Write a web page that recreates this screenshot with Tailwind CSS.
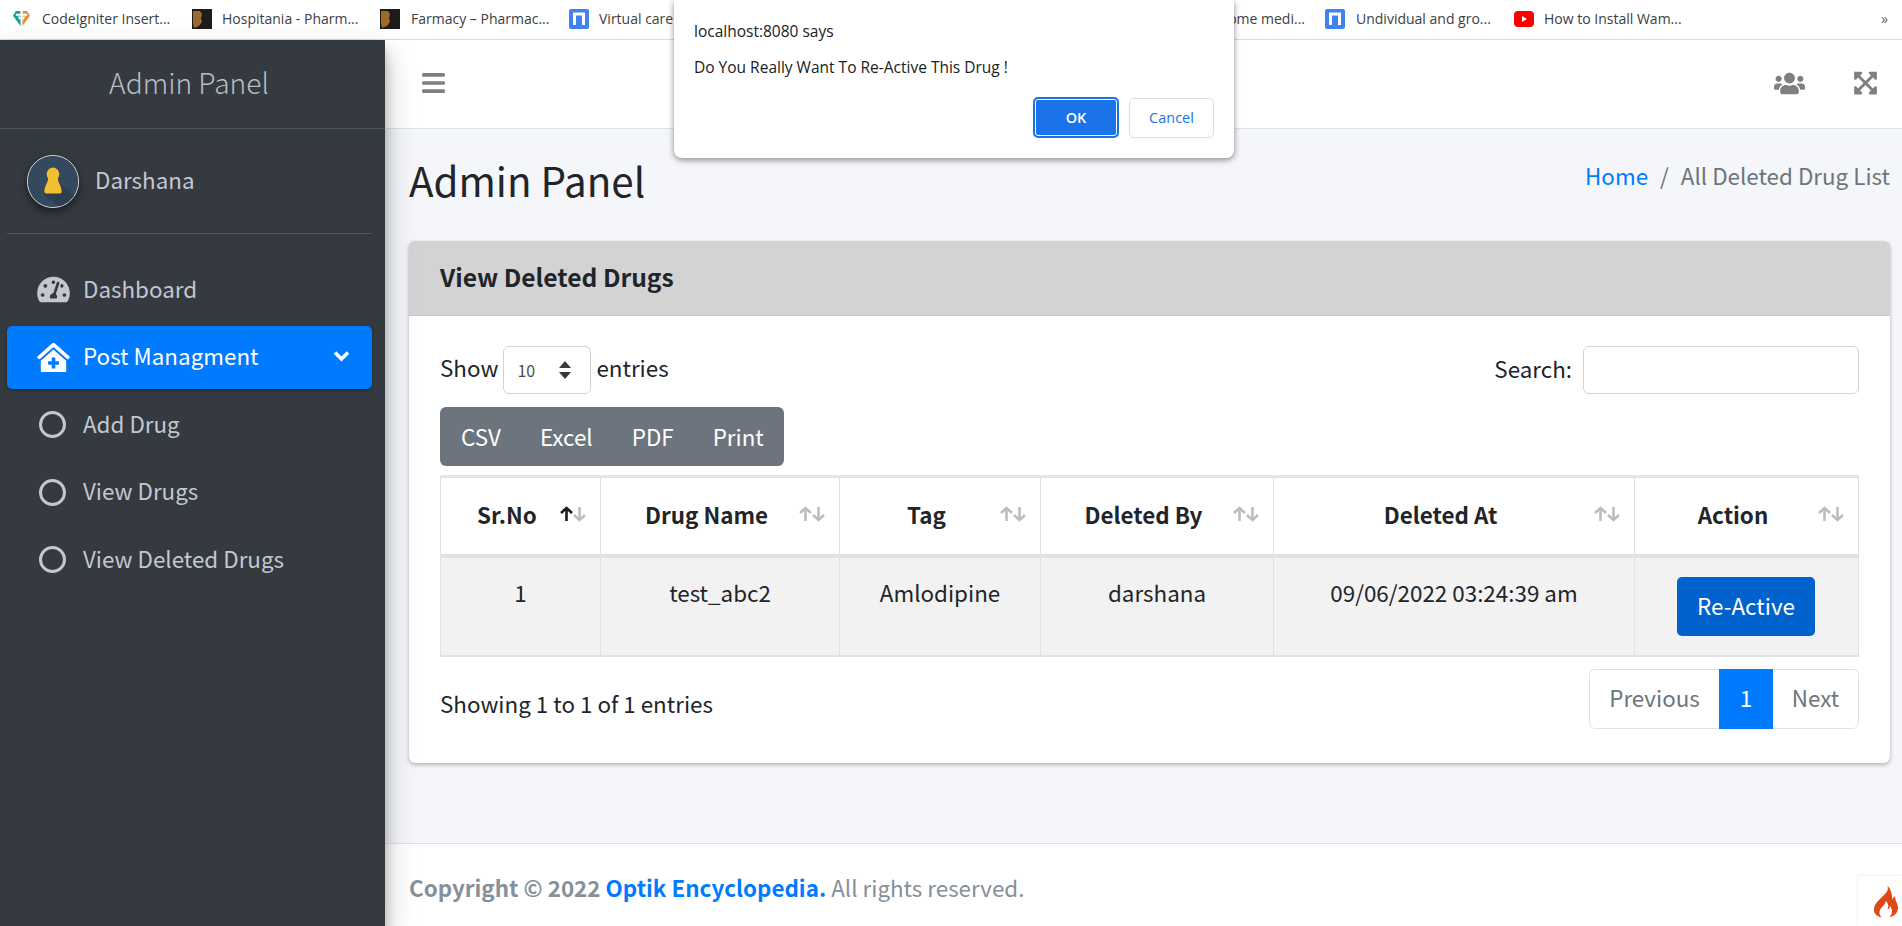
<!DOCTYPE html>
<html lang="en">
<head>
  <meta charset="UTF-8" />
  <title>Admin Panel</title>
  <script src="https://cdn.jsdelivr.net/npm/@tailwindcss/browser@4"></script>
</head>
<body class="relative h-[926px] overflow-hidden flex flex-col bg-[#f4f6f9] text-[22.4px] text-[#212529] font-['Noto_Sans_CJK_JP','Noto_Sans',sans-serif]">

  <!-- Bookmarks bar -->
  <div class="h-[40px] shrink-0 bg-white border-b border-[#d9dadc] flex items-center pl-[12px] pb-[2px] text-[14px] text-[#3c4043] font-['Open_Sans',sans-serif] whitespace-nowrap relative">
    <div class="w-[180px] flex items-center gap-[11px]">
      <svg class="w-[19px] h-[19px]" viewBox="0 0 20 20" fill="none"><path d="M9 2 H4 L1 7 L9 18 Z" fill="#1a9e96"/><path d="M11 2 H16 L19 7 L11 18 Z" fill="#e8913c"/><path d="M4 6 H16 M10 0 V6" stroke="#fff" stroke-width="2"/><path d="M6 8 H9 V13 Z" fill="#fff"/><path d="M14 8 H11 V13 Z" fill="#fff"/></svg>
      <span>CodeIgniter Insert...</span>
    </div>
    <div class="w-[188px] flex items-center gap-[10px]">
      <svg class="w-[20px] h-[20px]" viewBox="0 0 20 20"><rect width="20" height="20" fill="#1d1c1a"/><path d="M1 2 H8 L10 5 L9 9 L10 13 L7 17 L2 19 L1 14 Z" fill="#9c6a2c"/></svg>
      <span>Hospitania - Pharm...</span>
    </div>
    <div class="w-[189px] flex items-center gap-[11px]">
      <svg class="w-[20px] h-[20px]" viewBox="0 0 20 20"><rect width="20" height="20" fill="#1d1c1a"/><path d="M1 2 H8 L10 5 L9 9 L10 13 L7 17 L2 19 L1 14 Z" fill="#9c6a2c"/></svg>
      <span>Farmacy – Pharmac...</span>
    </div>
    <div class="w-[188px] flex items-center gap-[10px]">
      <svg class="w-[20px] h-[20px]" viewBox="0 0 20 20"><rect width="20" height="20" rx="2" fill="#3f83f0"/><path d="M5.5 16 V5 H14.5 V16" fill="none" stroke="#fff" stroke-width="3"/></svg>
      <span>Virtual care...</span>
    </div>
    <div class="w-[568px] pr-[20px] text-right">At home medi...</div>
    <div class="w-[189px] flex items-center gap-[11px]">
      <svg class="w-[20px] h-[20px]" viewBox="0 0 20 20"><rect width="20" height="20" rx="2" fill="#3f83f0"/><path d="M5.5 16 V5 H14.5 V16" fill="none" stroke="#fff" stroke-width="3"/></svg>
      <span>Undividual and gro...</span>
    </div>
    <div class="flex items-center gap-[10px]">
      <svg class="w-[20px] h-[16px]" viewBox="0 0 20 16"><rect width="20" height="16" rx="4" fill="#f00"/><path d="M8 5 L13 8 L8 11 Z" fill="#fff"/></svg>
      <span>How to Install Wam...</span>
    </div>
    <span class="ml-auto mr-[14px] text-[14px] text-[#5f6368]">»</span>
  </div>

  <div class="flex-1 flex min-h-0">

    <!-- Sidebar -->
    <aside class="w-[385px] shrink-0 bg-[#343a40] text-[#c2c7d0] z-10 shadow-[0_14px_28px_rgba(0,0,0,0.25),0_10px_10px_rgba(0,0,0,0.22)]">
      <div class="h-[89px] border-b border-[#4b545c] flex items-center justify-center text-[28.2px] font-light text-[#b8bdc5] pb-[4px] pr-[7px]">Admin Panel</div>
      <div class="ml-[7px] mr-[13px] h-[105px] border-b border-[#4f5962] flex items-center pl-[20px] gap-[16px]">
        <svg class="w-[52px] h-[53px] rounded-full border border-[#d5d8dc] shadow-[0_4px_8px_rgba(0,0,0,0.5)]" viewBox="0 0 52 53">
          <circle cx="26" cy="26.5" r="26" fill="#34495e"/>
          <path d="M24 22 L52 44 L34 53 L16 40 Z" fill="#2c3e50"/>
          <ellipse cx="26" cy="19" rx="6.5" ry="7" fill="#f0c030"/>
          <path d="M21 22 H31 C31 28 35 31 35 37 Q35 39 33 39 H19 Q17 39 17 37 C17 31 21 28 21 22 Z" fill="#f0c030"/>
        </svg>
        <span class="mb-[2px]">Darshana</span>
      </div>
      <nav class="pl-[7px] pr-[13px] pt-[24px] flex flex-col gap-[4.5px]">
        <a class="h-[63px] flex items-center pl-[30px] gap-[13px]">
          <svg class="w-[33px] h-[29px] fill-[#c2c7d0]" viewBox="0 0 576 512"><path d="M288 32C128.94 32 0 160.94 0 320c0 52.8 14.25 102.26 39.06 144.8 5.61 9.62 16.3 15.2 27.44 15.2h443c11.14 0 21.83-5.58 27.44-15.2C561.75 422.26 576 372.8 576 320c0-159.06-128.94-288-288-288zm0 64c14.71 0 26.58 10.13 30.32 23.65-1.11 2.26-2.64 4.23-3.45 6.67l-9.22 27.67c-5.13 3.49-10.97 6.01-17.64 6.01-17.67 0-32-14.33-32-32S270.33 96 288 96zM96 384c-17.67 0-32-14.33-32-32s14.33-32 32-32 32 14.33 32 32-14.33 32-32 32zm48-160c-17.67 0-32-14.33-32-32s14.33-32 32-32 32 14.33 32 32-14.33 32-32 32zm246.77-72.41l-61.33 184C343.13 347.33 352 364.54 352 384c0 11.72-3.38 22.55-8.88 32H232.88c-5.5-9.45-8.88-20.28-8.88-32 0-33.94 26.5-61.43 59.9-63.59l61.34-184.01c4.17-12.56 17.73-19.45 30.36-15.17 12.57 4.19 19.35 17.79 15.17 30.36zm14.66 57.2l15.52-46.55c3.47-1.29 7.13-2.23 11.05-2.23 17.67 0 32 14.33 32 32s-14.33 32-32 32c-11.38-.01-20.89-6.28-26.57-15.22zM480 384c-17.67 0-32-14.33-32-32s14.33-32 32-32 32 14.33 32 32-14.33 32-32 32z"/></svg>
          <span class="mb-[2px]">Dashboard</span>
        </a>
        <a class="h-[63px] flex items-center pl-[30px] gap-[13px] bg-[#007bff] text-white rounded-[5px] shadow-[0_1px_3px_rgba(0,0,0,0.4)]">
          <svg class="w-[33px] h-[29px] fill-white" viewBox="0 0 576 512"><path d="M288 115L69.47 307.71c-1.62 1.46-3.69 2.14-5.47 3.35V496a16 16 0 0 0 16 16h416a16 16 0 0 0 16-16V311.1c-1.7-1.16-3.72-1.82-5.26-3.2zm96 261a8 8 0 0 1-8 8h-56v56a8 8 0 0 1-8 8h-48a8 8 0 0 1-8-8v-56h-56a8 8 0 0 1-8-8v-48a8 8 0 0 1 8-8h56v-56a8 8 0 0 1 8-8h48a8 8 0 0 1 8 8v56h56a8 8 0 0 1 8 8zm186.69-139.72l-255.94-226a39.85 39.85 0 0 0-53.45 0l-256 226a16 16 0 0 0-1.21 22.6L25.5 282.7a16 16 0 0 0 22.6 1.21L277.42 81.63a16 16 0 0 1 21.17 0L527.91 283.9a16 16 0 0 0 22.6-1.21l21.4-23.82a16 16 0 0 0-1.22-22.59z"/></svg>
          <span class="flex-1 mb-[2px]">Post Managment</span>
          <svg class="w-[17px] h-[12px] mr-[22px] mb-[2px]" viewBox="0 0 17 12" fill="none" stroke="#fff" stroke-width="3.6"><path d="M2 2.5 L8.5 9 L15 2.5"/></svg>
        </a>
        <a class="h-[63px] flex items-center pl-[32px] gap-[17px]">
          <span class="w-[27px] h-[27px] rounded-full border-[3px] border-[#c2c7d0]"></span>
          <span class="mb-[2px]">Add Drug</span>
        </a>
        <a class="h-[63px] flex items-center pl-[32px] gap-[17px]">
          <span class="w-[27px] h-[27px] rounded-full border-[3px] border-[#c2c7d0]"></span>
          <span class="mb-[2px]">View Drugs</span>
        </a>
        <a class="h-[63px] flex items-center pl-[32px] gap-[17px]">
          <span class="w-[27px] h-[27px] rounded-full border-[3px] border-[#c2c7d0]"></span>
          <span class="mb-[2px]">View Deleted Drugs</span>
        </a>
      </nav>
    </aside>

    <!-- Main -->
    <div class="flex-1 min-w-0 flex flex-col">
      <header class="h-[89px] shrink-0 bg-white border-b border-[#dee2e6] flex items-center pl-[37px] pr-[25px] pb-[2px]">
        <svg class="w-[23px] h-[26px] fill-[#7f7f7f]" viewBox="0 0 448 512"><path d="M16 132h416c8.837 0 16-7.163 16-16V76c0-8.837-7.163-16-16-16H16C7.163 60 0 67.163 0 76v40c0 8.837 7.163 16 16 16zm0 160h416c8.837 0 16-7.163 16-16v-40c0-8.837-7.163-16-16-16H16c-8.837 0-16 7.163-16 16v40c0 8.837 7.163 16 16 16zm0 160h416c8.837 0 16-7.163 16-16v-40c0-8.837-7.163-16-16-16H16c-8.837 0-16 7.163-16 16v40c0 8.837 7.163 16 16 16z"/></svg>
        <svg class="ml-auto w-[31px] h-[25px] fill-[#7f7f7f]" viewBox="0 0 640 512"><path d="M96 224c35.3 0 64-28.7 64-64s-28.7-64-64-64-64 28.7-64 64 28.7 64 64 64zm448 0c35.3 0 64-28.7 64-64s-28.7-64-64-64-64 28.7-64 64 28.7 64 64 64zm32 32h-64c-17.6 0-33.5 7.1-45.1 18.6 40.3 22.1 68.9 62 75.1 109.4h66c17.7 0 32-14.3 32-32v-32c0-35.3-28.7-64-64-64zm-256 0c61.9 0 112-50.1 112-112S381.9 32 320 32 208 82.1 208 144s50.1 112 112 112zm76.8 32h-8.3c-20.8 10-43.9 16-68.5 16s-47.6-6-68.5-16h-8.3C179.6 288 128 339.6 128 403.2V432c0 26.5 21.5 48 48 48h288c26.5 0 48-21.5 48-48v-28.8c0-63.6-51.6-115.2-115.2-115.2zm-223.7-13.4C161.5 263.1 145.6 256 128 256H64c-35.3 0-64 28.7-64 64v32c0 17.7 14.3 32 32 32h65.9c6.3-47.4 34.9-87.3 75.2-109.4z"/></svg>
        <svg class="ml-[49px] w-[23px] h-[26px] fill-[#7f7f7f]" viewBox="0 0 448 512"><path d="M448 344v112a23.94 23.94 0 0 1-24 24H312c-21.39 0-32.09-25.9-17-41l36.2-36.2L224 295.6 116.77 402.9 153 439c15.09 15.1 4.39 41-17 41H24a23.94 23.94 0 0 1-24-24V344c0-21.4 25.89-32.1 41-17l36.19 36.2L184.46 256 77.18 148.7 41 185c-15.1 15.1-41 4.4-41-17V56a23.94 23.94 0 0 1 24-24h112c21.39 0 32.09 25.9 17 41l-36.2 36.2L224 216.4l107.23-107.3L295 73c-15.09-15.1-4.39-41 17-41h112a23.94 23.94 0 0 1 24 24v112c0 21.4-25.89 32.1-41 17l-36.19-36.2L263.54 256l107.28 107.3L407 327.1c15.1-15.2 41-4.5 41 16.9z"/></svg>
      </header>

      <div class="flex-1 pl-[24px] pr-[12px]">
        <div class="h-[112px] flex items-start justify-between">
          <h1 class="text-[40.3px] leading-[52px] mt-[25px]">Admin Panel</h1>
          <div class="mt-[28px] leading-[36px] flex gap-[12px]">
            <a class="text-[#007bff]">Home</a>
            <span class="text-[#6c757d]">/</span>
            <span class="text-[#6c757d]">All Deleted Drug List</span>
          </div>
        </div>

        <!-- Card -->
        <section class="bg-white rounded-[6px] shadow-[0_0_1px_rgba(0,0,0,0.2),0_2px_4px_rgba(0,0,0,0.25)] h-[522px] overflow-hidden">
          <div class="h-[75px] bg-[#d3d3d3] border-b border-[#c8c8c8] flex items-center pl-[31px] pb-[3px]">
            <h3 class="text-[24.6px] font-bold">View Deleted Drugs</h3>
          </div>
          <div class="px-[31px] pt-[30px]">
            <div class="flex justify-between h-[48px]">
              <div class="flex items-center gap-[5px]">
                <span class="mb-[4px]">Show</span>
                <div class="w-[88px] h-[48px] border border-[#ced4da] rounded-[6px] flex items-center justify-between pl-[13px] pr-[18px] text-[16px] text-[#495057]">
                  <span>10</span>
                  <svg class="w-[14px] h-[20px] fill-[#343a40]" viewBox="0 0 14 20"><path d="M7 1 L13 8 H1 Z M7 19 L1 12 H13 Z"/></svg>
                </div>
                <span class="mb-[4px]">entries</span>
              </div>
              <div class="flex items-center gap-[11px]">
                <span class="mb-[2px]">Search:</span>
                <div class="w-[276px] h-[48px] border border-[#ced4da] rounded-[6px]"></div>
              </div>
            </div>
            <div class="mt-[13px] w-[344px] h-[59px] bg-[#6c757d] rounded-[6px] flex items-center text-white pl-[21px] gap-[39px]">
              <span>CSV</span><span>Excel</span><span>PDF</span><span>Print</span>
            </div>

            <table class="mt-[9px] w-[1419px] table-fixed border-separate border-spacing-0 border-t-2 border-[#e4e6e9]">
              <colgroup>
                <col class="w-[160px]" /><col class="w-[239px]" /><col class="w-[201px]" /><col class="w-[233px]" /><col class="w-[361px]" /><col class="w-[225px]" />
              </colgroup>
              <thead>
                <tr class="h-[81px] font-bold">
                  <th class="relative border-t border-l border-b-[4px] border-[#dee2e6] pr-[27px] pb-[2px] font-bold">Sr.No
                    <svg class="absolute right-[14px] top-[28px] w-[26px] h-[16px]" viewBox="0 0 26 16" fill="none" stroke-width="2.6"><path d="M6.5 15 V2 M1 7 L6.5 2 L12 7" stroke="#1a1a1a"/><path d="M19.5 1 V14 M14 9 L19.5 14 L25 9" stroke="#bdbdbd"/></svg>
                  </th>
                  <th class="relative border-t border-l border-b-[4px] border-[#dee2e6] pr-[27px] pb-[2px] font-bold">Drug Name
                    <svg class="absolute right-[14px] top-[28px] w-[26px] h-[16px]" viewBox="0 0 26 16" fill="none" stroke-width="2.6" stroke="#bdbdbd"><path d="M6.5 15 V2 M1 7 L6.5 2 L12 7"/><path d="M19.5 1 V14 M14 9 L19.5 14 L25 9"/></svg>
                  </th>
                  <th class="relative border-t border-l border-b-[4px] border-[#dee2e6] pr-[27px] pb-[2px] font-bold">Tag
                    <svg class="absolute right-[14px] top-[28px] w-[26px] h-[16px]" viewBox="0 0 26 16" fill="none" stroke-width="2.6" stroke="#bdbdbd"><path d="M6.5 15 V2 M1 7 L6.5 2 L12 7"/><path d="M19.5 1 V14 M14 9 L19.5 14 L25 9"/></svg>
                  </th>
                  <th class="relative border-t border-l border-b-[4px] border-[#dee2e6] pr-[27px] pb-[2px] font-bold">Deleted By
                    <svg class="absolute right-[14px] top-[28px] w-[26px] h-[16px]" viewBox="0 0 26 16" fill="none" stroke-width="2.6" stroke="#bdbdbd"><path d="M6.5 15 V2 M1 7 L6.5 2 L12 7"/><path d="M19.5 1 V14 M14 9 L19.5 14 L25 9"/></svg>
                  </th>
                  <th class="relative border-t border-l border-b-[4px] border-[#dee2e6] pr-[27px] pb-[2px] font-bold">Deleted At
                    <svg class="absolute right-[14px] top-[28px] w-[26px] h-[16px]" viewBox="0 0 26 16" fill="none" stroke-width="2.6" stroke="#bdbdbd"><path d="M6.5 15 V2 M1 7 L6.5 2 L12 7"/><path d="M19.5 1 V14 M14 9 L19.5 14 L25 9"/></svg>
                  </th>
                  <th class="relative border-t border-x border-b-[4px] border-[#dee2e6] pr-[27px] pb-[2px] font-bold">Action
                    <svg class="absolute right-[14px] top-[28px] w-[26px] h-[16px]" viewBox="0 0 26 16" fill="none" stroke-width="2.6" stroke="#bdbdbd"><path d="M6.5 15 V2 M1 7 L6.5 2 L12 7"/><path d="M19.5 1 V14 M14 9 L19.5 14 L25 9"/></svg>
                  </th>
                </tr>
              </thead>
              <tbody>
                <tr class="h-[99px] bg-[#f2f2f2] text-center align-top">
                  <td class="border-l border-b-2 border-[#dee2e6] pt-[18px]">1</td>
                  <td class="border-l border-b-2 border-[#dee2e6] pt-[18px]">test_abc2</td>
                  <td class="border-l border-b-2 border-[#dee2e6] pt-[18px]">Amlodipine</td>
                  <td class="border-l border-b-2 border-[#dee2e6] pt-[18px]">darshana</td>
                  <td class="border-l border-b-2 border-[#dee2e6] pt-[18px]">09/06/2022 03:24:39 am</td>
                  <td class="border-x border-b-2 border-[#dee2e6] pt-[19px]">
                    <button class="w-[138px] h-[59px] mr-[1px] pb-[2px] bg-[#0062cc] text-white rounded-[5px]">Re-Active</button>
                  </td>
                </tr>
              </tbody>
            </table>

            <div class="mt-[12px] flex items-start justify-between">
              <span class="mt-[18px]">Showing 1 to 1 of 1 entries</span>
              <div class="h-[60px] flex items-stretch rounded-[6px] border border-[#dee2e6] text-[#6c757d]">
                <span class="w-[129px] pb-[2px] flex items-center justify-center">Previous</span>
                <span class="w-[54px] -my-px pb-[2px] flex items-center justify-center bg-[#007bff] text-white">1</span>
                <span class="w-[85px] pb-[2px] flex items-center justify-center">Next</span>
              </div>
            </div>
          </div>
        </section>
      </div>

      <footer class="h-[83px] shrink-0 bg-white border-t border-[#dee2e6] flex items-center pl-[24px] pt-[5px] text-[#869099]">
        <p><b>Copyright © 2022 <a class="text-[#007bff]">Optik Encyclopedia.</a></b> All rights reserved.</p>
      </footer>
    </div>
  </div>

  <!-- Profiler badge -->
  <div class="absolute right-0 bottom-0 w-[44px] h-[50px] bg-white shadow-[0_0_2px_rgba(0,0,0,0.15)] z-20 flex items-center justify-center pl-[11px]">
    <svg class="w-[24px] h-[33px] fill-[#dd4814]" viewBox="0 0 25 33"><path d="M14 0 C16 6 11 9 7 13 C3 17 0 20 0 25 C0 29 3 32 8 33 C5 30 5 27 7 24 C9 21 12 20 12 16 C16 19 15 23 14 25 C16 24 17 22 17 21 C19 25 20 29 16 33 C21 32 25 28 25 23 C25 18 22 17 22 11 C20 12 19 14 19 15 C19 9 18 4 14 0 Z"/></svg>
  </div>

  <!-- Browser confirm dialog -->
  <div class="absolute left-[674px] top-0 w-[560px] h-[158px] bg-white rounded-b-[8px] shadow-[0_2px_6px_rgba(0,0,0,0.45)] z-30 font-['Open_Sans',sans-serif] text-[#202124]">
    <p class="absolute left-[20px] top-[20px] text-[15.5px] leading-[22px]">localhost:8080 says</p>
    <p class="absolute left-[20px] top-[56px] text-[15.5px] leading-[22px]">Do You Really Want To Re-Active This Drug !</p>
    <div class="absolute right-[20px] top-[97px] flex items-center gap-[10px] text-[14.5px] font-semibold">
      <button class="w-[86px] h-[41px] rounded-[5px] bg-[#1a73e8] text-white border-[2px] border-[#1a73e8] ring-inset ring-1 ring-white">OK</button>
      <button class="w-[85px] h-[40px] rounded-[5px] bg-white text-[#1a73e8] border border-[#dadce0] font-normal">Cancel</button>
    </div>
  </div>
</body>
</html>
